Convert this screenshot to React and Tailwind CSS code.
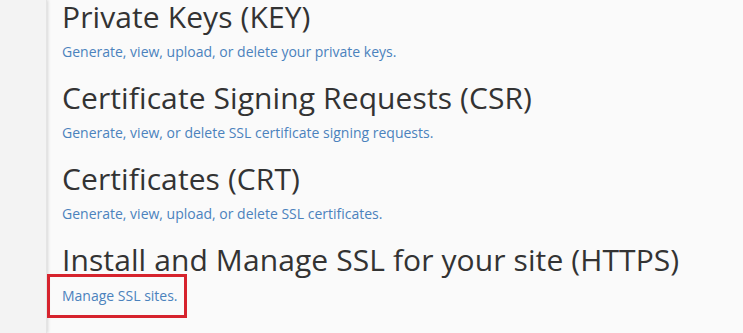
export default function App() {
  const sections = [
    { title: "Private Keys (KEY)", desc: "Generate, view, upload, or delete your private keys." },
    { title: "Certificate Signing Requests (CSR)", desc: "Generate, view, or delete SSL certificate signing requests." },
    { title: "Certificates (CRT)", desc: "Generate, view, upload, or delete SSL certificates." },
    { title: "Install and Manage SSL for your site (HTTPS)", desc: "Manage SSL sites.", boxed: true },
  ];
  return (
    <div className="flex h-[333px] w-[743px] overflow-hidden bg-[#fafafa]" style={{ fontFamily: '"Open Sans", sans-serif' }}>
      <div className="w-[47px] shrink-0 bg-[#f3f3f3] shadow-[1px_0_3px_rgba(0,0,0,0.15)] border-r border-[#e4e4e4]" />
      <div className="flex flex-col pl-[15px] -mt-[3px]">
        {sections.map((s) => (
          <div key={s.title} className="flex flex-col">
            <h2 className="text-[30px] leading-[40px] text-[#333] tracking-[0.1px]">{s.title}</h2>
            {s.boxed ? (
              <div className="-ml-[15px] -mt-[6px] w-[140px] h-[44px] border-[3px] border-[#d6232d] flex items-center pl-[12px]">
                <a className="text-[14px] text-[#4b82bd] leading-[20px]">{s.desc}</a>
              </div>
            ) : (
              <a className="text-[14px] text-[#4b82bd] leading-[20px] mt-[5px] mb-[16px]">{s.desc}</a>
            )}
          </div>
        ))}
      </div>
    </div>
  );
}
